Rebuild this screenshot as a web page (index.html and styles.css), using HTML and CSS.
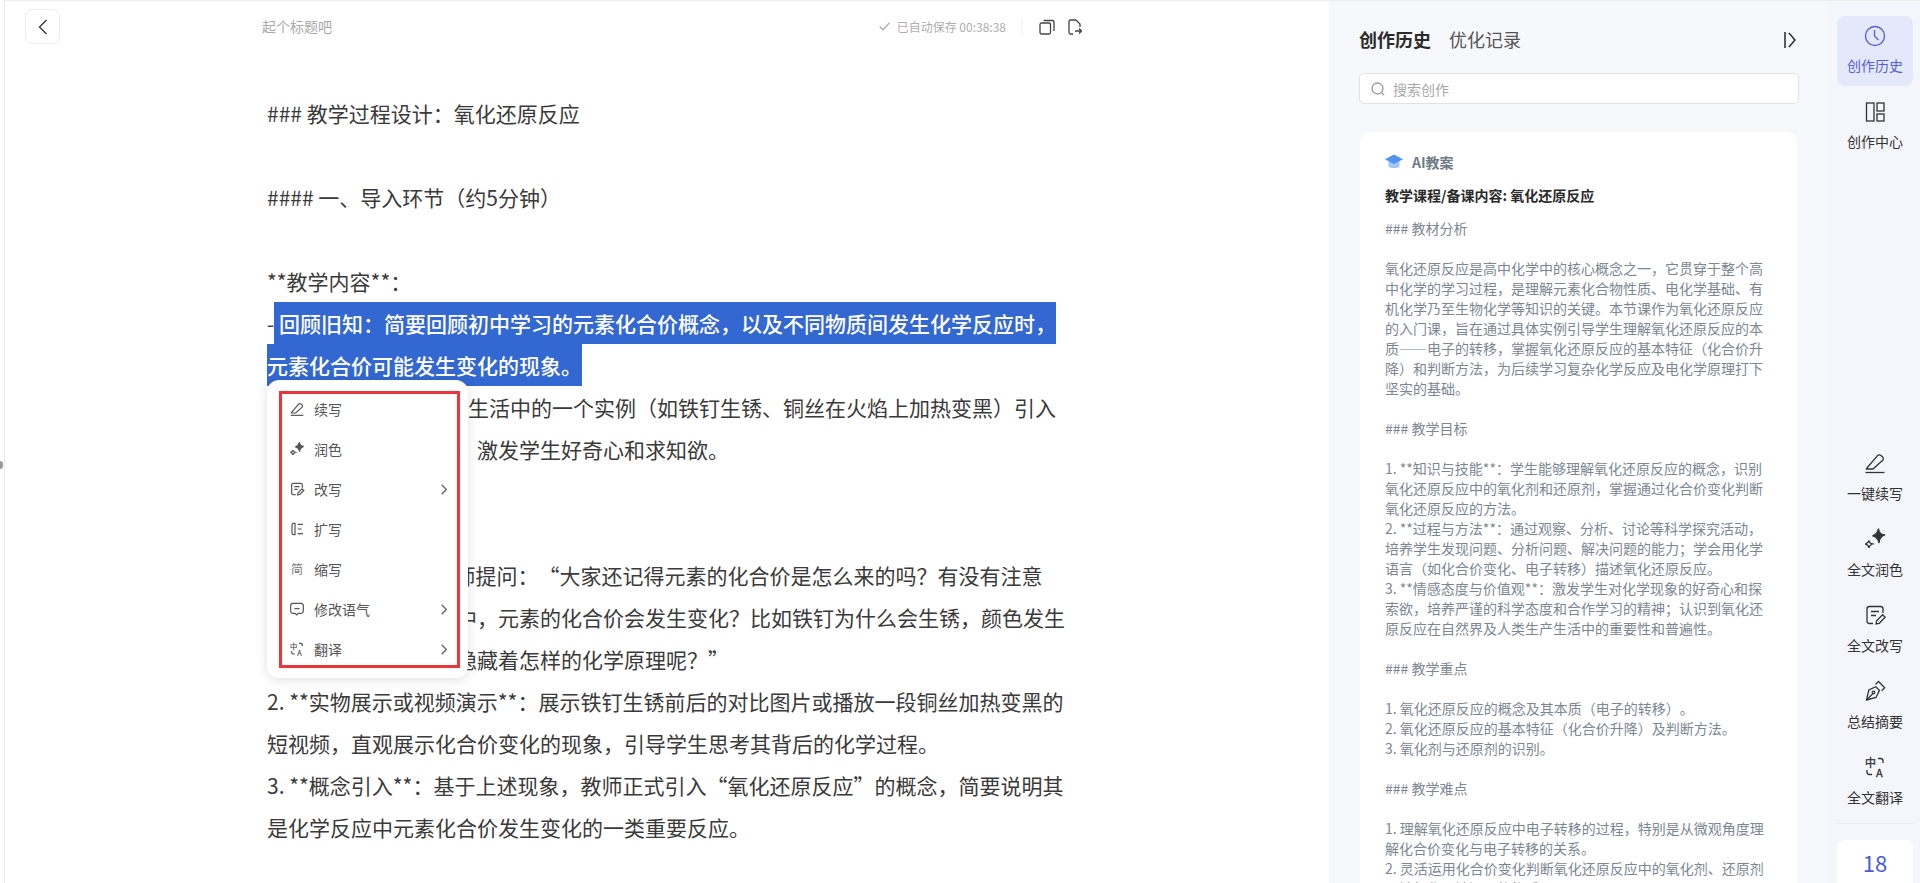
FILE: index.html
```html
<!DOCTYPE html>
<html lang="zh-CN">
<head>
  <meta charset="UTF-8">
  <title>AI教案</title>
  <link rel="stylesheet" href="styles.css">
</head>
<body>

  <!-- shared icons -->
  <svg class="defs" width="0" height="0">
    <symbol id="i-write" viewBox="0 0 24 24"><path d="M3.5 17.5 14.5 4.6a2.4 2.4 0 0 1 3.4-.2l1.6 1.4a2.4 2.4 0 0 1 .2 3.4L10 18H3.5Z"/><path d="M2.5 21.5h19"/></symbol>
    <symbol id="i-spark" viewBox="0 0 24 24"><path d="M15.5 1.5c.3 4 2 6.300 6.500 6.500-3.800 1.200-5.800 3.200-6 8-1-4.500-2.800-6.700-6.500-7.200 3.500-1.200 5.300-3.300 6-7.300Z" fill="currentColor"/><path d="M6 13.500c.2 2 1.200 3 3.500 3.500-2 .6-3 1.700-3.500 3.800-.500-2.200-1.600-3.300-3.800-3.700 2-.5 3.200-1.500 3.800-3.600Z"/></symbol>
    <symbol id="i-rewrite" viewBox="0 0 24 24"><path d="M20 10V6a2.500 2.500 0 0 0-2.500-2.500h-11A2.500 2.500 0 0 0 4 6v12a2.500 2.500 0 0 0 2.500 2.500H10"/><path d="M8 8.500h8M8 12.500h5"/><path d="M13 21l.6-3.300 6-6 2.600 2.600-6 6L13 21Z"/></symbol>
    <symbol id="i-expand" viewBox="0 0 24 24"><path d="M9 3.500H7A2.500 2.500 0 0 0 4.500 6v12A2.500 2.500 0 0 0 7 20.500h2V3.500Z"/><path d="M13 5h8M13 12h6M13 19h8"/></symbol>
    <symbol id="i-chat" viewBox="0 0 24 24"><path d="M6 3.500h12A3.500 3.500 0 0 1 21.500 7v8a3.500 3.500 0 0 1-3.500 3.500h-4l-2.500 2.500-2.500-2.500H6A3.500 3.500 0 0 1 2.500 15V7A3.500 3.500 0 0 1 6 3.500Z"/><path d="M8 11.500h8"/></symbol>
    <symbol id="i-nib" viewBox="0 0 24 24"><path d="M3.500 21 5.800 11l7-3.300 3.700 3.700L13 18.500 3.500 21Z"/><path d="M3.500 21l6-6"/><circle cx="10.500" cy="13.500" r="1.300"/><path d="M12.500 5.500l3-3 6.200 6.200-3 3"/></symbol>
    <symbol id="i-chev" viewBox="0 0 6 11"><path d="M.7.7 5.300 5.500.7 10.300"/></symbol>
  </svg>

  <span class="edge-handle"></span>

  <main class="editor">
    <header class="editor-head">
      <button class="back-btn">
        <svg width="10" height="16" viewBox="0 0 10 16"><path d="M8.500 1 1.500 8l7 7"/></svg>
      </button>
      <span class="doc-title">起个标题吧</span>
      <div class="save-state">
        <svg width="11" height="9" viewBox="0 0 11 9"><path d="M.7 4.500 4 7.800 10.300 1"/></svg>
        <span>已自动保存 00:38:38</span>
      </div>
      <i class="head-divider"></i>
      <svg class="head-icon" width="16" height="16" viewBox="0 0 16 16"><rect x="1" y="4" width="10.500" height="11" rx="1.500"/><path d="M4.500 1.500h9A1.500 1.500 0 0 1 15 3v9"/></svg>
      <svg class="head-icon" width="14" height="16" viewBox="0 0 14 16"><path d="M8 1H2.500A1.500 1.500 0 0 0 1 2.500v11A1.500 1.500 0 0 0 2.500 15H5"/><path d="M8 1l4 4v3"/><path d="M7 12h6.500M11 9.500l2.500 2.500-2.500 2.500"/></svg>
    </header>

    <div class="doc">### 教学过程设计：氧化还原反应

#### 一、导入环节（约5分钟）

**教学内容**：
-<span class="picked"> 回顾旧知：简要回顾初中学习的元素化合价概念，以及不同物质间发生化学反应时，元素化合价可能发生变化的现象。</span>
- 情境导入：教师展示生活中的一个实例（如铁钉生锈、铜丝在火焰上加热变黑）引入今天的学习主题内容，激发学生好奇心和求知欲。

**教学活动**：
1. **提问回顾**：教师提问：“大家还记得元素的化合价是怎么来的吗？有没有注意
到，在某些化学反应中，元素的化合价会发生变化？比如铁钉为什么会生锈，颜色发生变化？这些现象背后隐藏着怎样的化学原理呢？”
2. **实物展示或视频演示**：展示铁钉生锈前后的对比图片或播放一段铜丝加热变黑的短视频，直观展示化合价变化的现象，引导学生思考其背后的化学过程。
3. **概念引入**：基于上述现象，教师正式引入“氧化还原反应”的概念，简要说明其是化学反应中元素化合价发生变化的一类重要反应。<div class="pop-menu">
        <div class="menu-item"><svg class="menu-icon"><use href="#i-write"/></svg>续写</div>
        <div class="menu-item"><svg class="menu-icon"><use href="#i-spark"/></svg>润色</div>
        <div class="menu-item"><svg class="menu-icon"><use href="#i-rewrite"/></svg>改写<svg class="menu-chev"><use href="#i-chev"/></svg></div>
        <div class="menu-item"><svg class="menu-icon"><use href="#i-expand"/></svg>扩写</div>
        <div class="menu-item"><span class="menu-icon menu-glyph">简</span>缩写</div>
        <div class="menu-item"><svg class="menu-icon"><use href="#i-chat"/></svg>修改语气<svg class="menu-chev"><use href="#i-chev"/></svg></div>
        <div class="menu-item">
          <svg class="menu-icon" viewBox="0 0 24 24"><path d="M15 3.500h2.500A2.500 2.500 0 0 1 20 6v2"/><path d="M4 15v2a2.500 2.500 0 0 0 2.500 2.500H9"/><text x="1.500" y="12" class="icon-zh">中</text><text x="12.500" y="22" class="icon-en">A</text></svg>
          翻译<svg class="menu-chev"><use href="#i-chev"/></svg>
        </div>
        <span class="red-frame"></span>
      </div></div>
  </main>

  <section class="history">
    <div class="tabs">
      <span class="tab active">创作历史</span>
      <span class="tab">优化记录</span>
      <svg class="collapse" width="12" height="16" viewBox="0 0 12 16"><path d="M1 0v16"/><path d="M5 1l6 7-6 7"/></svg>
    </div>

    <div class="search">
      <svg width="14" height="14" viewBox="0 0 14 14"><circle cx="6.500" cy="6.500" r="5.500"/><path d="M10.500 10.500 13 13"/></svg>
      <span>搜索创作</span>
    </div>

    <article class="card">
      <div class="card-kind">
        <svg width="18" height="16" viewBox="0 0 18 16"><path d="M3.500 7v5.500c1.500 2 9.500 2 11 0V7Z" fill="#a3c6f6" stroke="none"/><path d="M9 .5 18 5.200 9 10 0 5.200Z" fill="#4f94ee" stroke="none"/></svg>
        AI教案
      </div>
      <h3 class="card-title">教学课程/备课内容: 氧化还原反应</h3>
      <div class="card-body">### 教材分析

氧化还原反应是高中化学中的核心概念之一，它贯穿于整个高中化学的学习过程，是理解元素化合物性质、电化学基础、有机化学乃至生物化学等知识的关键。本节课作为氧化还原反应的入门课，旨在通过具体实例引导学生理解氧化还原反应的本质——电子的转移，掌握氧化还原反应的基本特征（化合价升降）和判断方法，为后续学习复杂化学反应及电化学原理打下坚实的基础。

### 教学目标

1. **知识与技能**：学生能够理解氧化还原反应的概念，识别氧化还原反应中的氧化剂和还原剂，掌握通过化合价变化判断氧化还原反应的方法。
2. **过程与方法**：通过观察、分析、讨论等科学探究活动，培养学生发现问题、分析问题、解决问题的能力；学会用化学语言（如化合价变化、电子转移）描述氧化还原反应。
3. **情感态度与价值观**：激发学生对化学现象的好奇心和探索欲，培养严谨的科学态度和合作学习的精神；认识到氧化还原反应在自然界及人类生产生活中的重要性和普遍性。

### 教学重点

1. 氧化还原反应的概念及其本质（电子的转移）。
2. 氧化还原反应的基本特征（化合价升降）及判断方法。
3. 氧化剂与还原剂的识别。

### 教学难点

1. 理解氧化还原反应中电子转移的过程，特别是从微观角度理解化合价变化与电子转移的关系。
2. 灵活运用化合价变化判断氧化还原反应中的氧化剂、还原剂及被氧化、被还原的物质。</div>
    </article>
  </section>

  <nav class="rail">
    <div class="rail-top">
      <div class="rail-item active">
        <svg class="rail-icon" viewBox="0 0 24 24"><circle cx="12" cy="12" r="9.500"/><path d="M11.500 6v6l4 4"/></svg>
        创作历史
      </div>
      <div class="rail-item">
        <svg class="rail-icon" viewBox="0 0 24 24"><rect x="3.500" y="3" width="7.500" height="18"/><rect x="14" y="3" width="7" height="8"/><rect x="14" y="14" width="7" height="7"/></svg>
        创作中心
      </div>
    </div>
    <div class="rail-tools">
      <div class="rail-item"><svg class="rail-icon"><use href="#i-write"/></svg>一键续写</div>
      <div class="rail-item"><svg class="rail-icon"><use href="#i-spark"/></svg>全文润色</div>
      <div class="rail-item"><svg class="rail-icon"><use href="#i-rewrite"/></svg>全文改写</div>
      <div class="rail-item"><svg class="rail-icon"><use href="#i-nib"/></svg>总结摘要</div>
      <div class="rail-item">
        <svg class="rail-icon" viewBox="0 0 24 24"><path d="M15 3.500h2.500A2.500 2.500 0 0 1 20 6v2"/><path d="M4 15v2a2.500 2.500 0 0 0 2.500 2.500H9"/><text x="2" y="12" class="icon-zh">中</text><text x="13" y="22" class="icon-en">A</text></svg>
        全文翻译
      </div>
    </div>
    <div class="rail-count">18</div>
  </nav>

</body>
</html>
```

FILE: styles.css
```css
* {
  box-sizing: border-box;
}
html, body {
  height: 100%;
}
body {
  margin: 0;
  display: flex;
  overflow: hidden;
  background: #fff;
  color: #333;
  font-family: "Noto Sans CJK SC", "Noto Sans", sans-serif;
  text-spacing-trim: space-all;
}
svg {
  fill: none;
  stroke: currentColor;
  stroke-width: 1.3;
  display: block;
  flex: none;
}
.defs {
  position: absolute;
}
.icon-zh, .icon-en {
  fill: currentColor;
  stroke: currentColor;
  stroke-width: 0.3;
  font-family: "Noto Sans CJK SC", sans-serif;
  font-size: 11px;
}
.edge-handle {
  position: absolute;
  left: 0;
  top: 461px;
  width: 3px;
  height: 8px;
  border-radius: 0 4px 4px 0;
  background: #9a9a9a;
}

/* editor */
.editor {
  width: 1325px;
  margin-left: 4px;
  border-left: 1px solid #e9e9e9;
  border-top: 1px solid #eee;
  flex: none;
}
.editor-head {
  display: flex;
  align-items: center;
  padding: 8px 247px 0 20px;
  height: 43px;
}
.back-btn {
  width: 35px;
  height: 35px;
  padding: 0;
  display: flex;
  align-items: center;
  justify-content: center;
  background: #fff;
  border: 1px solid #ececec;
  border-radius: 7px;
  color: #333;
}
.doc-title {
  margin-left: 202px;
  padding-bottom: 2px;
  font-size: 14px;
  color: #a8a8a8;
}
.save-state {
  margin-left: auto;
  display: flex;
  align-items: center;
  gap: 7px;
  font-size: 12px;
  color: #aeaeae;
}
.head-divider {
  width: 1px;
  height: 16px;
  margin: 0 17px 0 15px;
  background: #f2f2f2;
}
.head-icon {
  color: #444;
  margin-left: 13px;
}
.head-divider + .head-icon {
  margin-left: 0;
}
.doc {
  position: relative;
  width: 798px;
  margin: 48px 0 0 262px;
  font-size: 21px;
  line-height: 42px;
  color: #3a3a3a;
  white-space: pre-wrap;
}
.picked {
  padding: 6px 0;
  background: #3367d1;
  color: #fff;
  font-weight: 500;
  -webkit-box-decoration-break: clone;
  box-decoration-break: clone;
}

/* floating menu on the selection */
.pop-menu {
  position: absolute;
  left: 0;
  top: 288px;
  width: 201px;
  height: 298px;
  padding-top: 10px;
  background: #fff;
  border-radius: 12px;
  box-shadow: 0 2px 12px rgba(0, 0, 0, 0.12);
  white-space: normal;
}
.menu-item {
  display: flex;
  align-items: center;
  height: 40px;
  padding: 0 21px 2px 22px;
  font-size: 14px;
  line-height: 20px;
  color: #555;
}
.menu-icon {
  width: 16px;
  height: 16px;
  margin-right: 9px;
  color: #555;
  stroke-width: 1.8;
  flex: none;
}
.menu-glyph {
  font-size: 12px;
  line-height: 16px;
  text-align: center;
  color: #777;
}
.menu-chev {
  width: 6px;
  height: 11px;
  margin-left: auto;
  color: #666;
}
.red-frame {
  position: absolute;
  left: 12px;
  top: 11px;
  width: 181px;
  height: 277px;
  border: 3px solid #e9353b;
}

/* history panel */
.history {
  width: 499px;
  flex: none;
  padding: 28px 29px 0 30px;
  background: #f6f8fb;
  border-top: 1px solid #eee;
  overflow: hidden;
}
.tabs {
  display: flex;
  align-items: center;
  gap: 18px;
  height: 26px;
  margin-top: -1px;
  padding-bottom: 4px;
}
.tab {
  font-size: 18px;
  color: #555;
}
.tab.active {
  font-weight: 700;
  color: #2b2b2b;
}
.collapse {
  margin: 2px 3px 0 auto;
  color: #333;
  stroke-width: 1.6;
}
.search {
  display: flex;
  align-items: center;
  gap: 8px;
  height: 31px;
  margin-top: 19px;
  padding-left: 11px;
  background: #fff;
  border: 1px solid #dfe2e6;
  border-radius: 5px;
  font-size: 14px;
  color: #a9a9a9;
}
.search svg {
  color: #999;
}
.card {
  margin: 28px 2px 0 1px;
  padding: 20px 25px;
  background: #fff;
  border-radius: 10px;
}
.card-kind {
  display: flex;
  align-items: center;
  gap: 9px;
  height: 20px;
  font-size: 14px;
  font-weight: 700;
  color: #6f7b88;
}
.card-title {
  margin: 13px 0;
  font-size: 14px;
  line-height: 20px;
  font-weight: 700;
  color: #2a2a2a;
}
.card-body {
  font-size: 14px;
  line-height: 20px;
  color: #7b8793;
  white-space: pre-wrap;
}

/* right rail */
.rail {
  flex: 1;
  display: flex;
  flex-direction: column;
  padding: 15px 7px 0 9px;
  background: #f4f6fc;
  border-top: 1px solid #eee;
}
.rail-top {
  display: flex;
  flex-direction: column;
  gap: 6px;
}
.rail-item {
  display: flex;
  flex-direction: column;
  align-items: center;
  padding-top: 8px;
  height: 70px;
  font-size: 14px;
  line-height: 20px;
  color: #333;
}
.rail-item.active {
  background: #e3e8fa;
  border-radius: 8px;
  color: #5560d6;
}
.rail-icon {
  width: 24px;
  height: 24px;
  margin-bottom: 7px;
}
.rail-tools {
  margin-top: auto;
  display: flex;
  flex-direction: column;
  gap: 24px;
  padding-bottom: 16px;
  border-bottom: 1px solid #e8ebf3;
}
.rail-tools .rail-item {
  height: auto;
  padding-top: 0;
}
.rail-tools .rail-icon {
  margin-bottom: 8px;
}
.rail-count {
  height: 43px;
  margin-top: 16px;
  padding-top: 7px;
  background: #fff;
  border-radius: 8px 8px 0 0;
  font-size: 22px;
  line-height: 30px;
  text-align: center;
  color: #4a5bd4;
}
```
